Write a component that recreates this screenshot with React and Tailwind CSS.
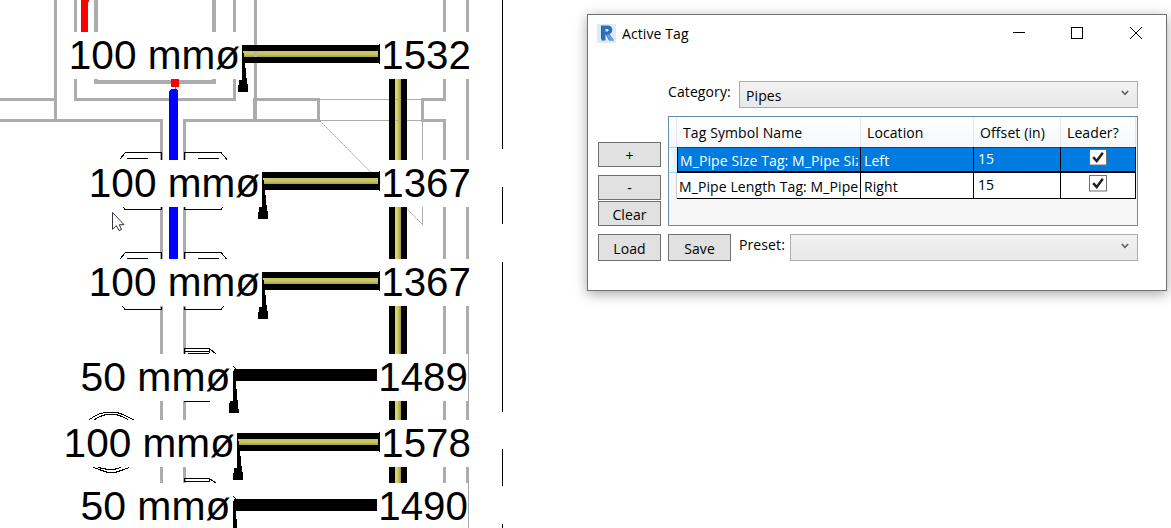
import React from "react";

const GRAY = "#acacac";

// l / r: tag texts with start x and drawn length; px, py: pipe origin; m: mask top; dx, dy: leader offset
const ROWS = [
  { l: "100 mmø", x: 68.8, w: 171.3, y: 69.3, r: "1532", rx: 381.3, px: 242, py: 45, wide: true, m: 32, dx: 0, dy: 0 },
  { l: "100 mmø", x: 88.8, w: 171.3, y: 197.3, r: "1367", rx: 381.3, px: 262, py: 172, wide: true, m: 160, dx: 20, dy: 127 },
  { l: "100 mmø", x: 88.8, w: 171.3, y: 296.3, r: "1367", rx: 381.3, px: 262, py: 272, wide: true, m: 259, dx: 20, dy: 227 },
  { l: "50 mmø", x: 80.5, w: 150, y: 391.3, r: "1489", rx: 378.3, px: 234, py: 369, wide: false, m: 354, dx: -9.5, dy: 321 },
  { l: "100 mmø", x: 63.6, w: 171.3, y: 457.3, r: "1578", rx: 381.3, px: 237, py: 433, wide: true, m: 420, dx: -5, dy: 388 },
  { l: "50 mmø", x: 80.5, w: 150, y: 520.3, r: "1490", rx: 378.3, px: 234, py: 499, wide: false, m: 483, dx: -9.5, dy: 451 },
];

const WALLS = [
  [54, 0, 3, 120], [74, 0, 3, 101], [94, 0, 4, 84], [212, 0, 4, 84], [233, 0, 3, 101],
  [254, 0, 3, 99], [253, 98, 4, 24], [0, 98, 55, 3], [74, 98, 162, 3], [95, 80, 121, 4],
  [0, 119, 163, 3], [183, 119, 137, 3], [254, 98, 65, 3], [317, 98, 3, 24], [421, 98, 3, 24],
  [421, 98, 25, 3], [421, 119, 25, 3], [443, 0, 3, 101], [443, 119, 3, 364], [466, 0, 3, 483],
  [160, 119, 3, 364], [183, 119, 3, 364], [320, 99, 101, 1], [320, 120, 101, 1], [422, 120, 1, 105],
];

function Basin({ dy }) {
  return (
    <g transform={`translate(0 ${dy})`} fill="none" stroke="#000">
      <path d="M119.5 159.5L125.5 152.5H161.5V160M127 158.5H148M184.5 160V152.5H221L227 159.5M198 158.5H219" />
      <path d="M122.5 206.5L125 209.5H161.5V207M184.5 207V209.5H221L223.5 206.5" />
    </g>
  );
}

function Drawing() {
  return (
    <svg className="h-[528px] w-[520px] shrink-0" viewBox="0 0 520 528">
      <defs>
        <linearGradient id="ph" x1="0" x2="0" y1="0" y2="1">
          <stop offset="0" stopColor="#c6c463" /><stop offset=".5" stopColor="#cbc963" /><stop offset="1" stopColor="#a3a04b" />
        </linearGradient>
        <linearGradient id="pv">
          <stop offset="0" stopColor="#d9d765" /><stop offset=".4" stopColor="#d5d367" /><stop offset="1" stopColor="#98954b" />
        </linearGradient>
      </defs>
      <g fill={GRAY} shapeRendering="crispEdges">
        {WALLS.map(([x, y, w, h], i) => <rect key={i} x={x} y={y} width={w} height={h} />)}
      </g>
      <path d="M320 121L422.5 224.5" stroke="#999" strokeWidth=".9" strokeDasharray="2 .6" />
      <g shapeRendering="crispEdges">
        <rect x="389" y="79" width="18" height="404" fill="#000" />
        <rect x="395" y="79" width="6" height="404" fill="url(#pv)" />
        <path d="M395 99.5H401M395 120.5H401" stroke="#b1af86" />
        <path d="M81 0H89V2H88V32H81Z" fill="#f00" />
        <path d="M175.5 86V90" stroke="#777" />
        <rect x="171" y="79" width="8" height="8" fill="#f00" />
        <path d="M169 259V91L171 89H176L178 91V259Z" fill="#00f" />
      </g>
      <g shapeRendering="crispEdges"><Basin dy={0} /><Basin dy={100} /></g>
      <g fill="none" stroke="#000" shapeRendering="crispEdges">
        <path d="M184.5 354V348.5H209.5V353M185 351.5H209M188 353.5H209M210 349L216 354M184 401.5H210" />
        <path d="M184.5 482V478.5H209.5V482M185 481.5H209M210 479L216 483" />
        <path d="M89.5 419.5L94 416.500L100 413.500L106 412.500H117L123 414.500L129 417.500L134 420" />
        <path d="M94.500 419.500L100 416.500L106 414.500H116L122 416.500L128 419.500" />
        <path d="M93.500 467.500L99 469.500L105 471.500L108 472.500H115L118 471.500L124 469.500L129 467.500" />
        <path d="M98 467.500L103 468.500L108 469.500H114L117 468.500L121 467.500" />
      </g>
      {ROWS.map((r, i) => (
        <g key={i} fill="#fff" shapeRendering="crispEdges">
          <rect x={r.x} y={r.m} width="171" height="47" />
          <rect x="381" y={r.m} width={r.wide ? 92 : 87} height="47" />
        </g>
      ))}
      <rect x="254" y="30" width="3" height="52" fill={GRAY} shapeRendering="crispEdges" />
      <rect x="468" y="483" width="1" height="45" fill={GRAY} shapeRendering="crispEdges" />
      {ROWS.map((r, i) => (
        <g key={i}>
          <g shapeRendering="crispEdges">
            {r.wide ? (
              <>
                <rect x={r.px} y={r.py} width={379 - r.px} height="18" fill="#000" />
                <rect x="379" y={r.py - 1} width="1" height="20" fill="#000" />
                <rect x={r.px} y={r.py + 6} width={378 - r.px} height="6" fill="url(#ph)" />
                <path d={`M${r.px + 1.5} ${r.py + 8}v8`} stroke="#000" />
              </>
            ) : (
              <>
                <rect x={r.px} y={r.py} width={377 - r.px} height="12" fill="#000" />
                <path d={`M${r.px - 1} ${r.py - 3}l3 3`} stroke="#000" />
              </>
            )}
            <path transform={`translate(${r.dx} ${r.dy})`} d="M242 50V56V80H239V82L238 88V92H248V88L247 79L246 78V68H245V60H244V56H243V50Z" />
          </g>
          <g fontFamily="Liberation Sans, Arial, sans-serif" fontSize="41.2" fill="#000">
            <text x={r.x} y={r.y} textLength={r.w} lengthAdjust="spacingAndGlyphs">{r.l}</text>
            <text x={r.rx} y={r.y} textLength="89.6" lengthAdjust="spacingAndGlyphs">{r.r}</text>
          </g>
        </g>
      ))}
      <path d="M254 54H257" stroke="#b8b8a0" strokeWidth="6" />
      <path d="M502.500 0V149M502.500 187V224M502.500 262V412M502.500 449V486M502.500 524V528" stroke="#000" shapeRendering="crispEdges" />
      <path d="M112.500 212.500V229.300L116.300 225.700L119 230.500L121.500 229.500L119.300 224.700H124Z" fill="#fff" stroke="#1c1c30" strokeWidth=".9" />
    </svg>
  );
}

function Button({ children, className }) {
  return <button className={`flex w-[63px] items-center justify-center border border-[#707070] bg-[#e1e1e1] ${className}`}>{children}</button>;
}

function Combo({ children, className }) {
  return (
    <div className={`flex h-[27px] items-center justify-between border border-[#acacac] bg-linear-to-b from-[#f2f2f2] to-[#e8e8e8] pr-2 pl-1.5 ${className}`}>
      <span className="pt-0.5">{children}</span>
      <svg className="mb-[3px] h-[6px] w-[8px]" viewBox="0 0 8 6"><path d="M.8 1L4 4.300L7.200 1" fill="none" stroke="#606060" strokeWidth="1.600" /></svg>
    </div>
  );
}

function Check() {
  return (
    <svg className="h-[17px] w-[18px]" viewBox="0 0 18 17">
      <rect x=".5" y=".5" width="17" height="15.500" fill="#fff" stroke="#707070" />
      <path d="M4.200 8.200L7.700 12L13.800 3.800" fill="none" stroke="#212121" strokeWidth="2.500" />
    </svg>
  );
}

const COLS = "grid grid-cols-[8px_184px_113px_87px_75px]";

function Row({ cells, selected }) {
  const cell = selected
    ? "border-r border-b-2 border-black bg-[#007bdf] text-white shadow-[inset_0_1px_0_#10497c]"
    : "border-r border-b border-black bg-white";
  return (
    <div className={`${COLS} h-[26px]`}>
      <div className={selected ? "border-y border-[#98d8f8] bg-linear-to-r from-white to-[#d8f0fc]" : "border-r border-[#d0d0d0] bg-[#f8f8f8]"} />
      <div className={`${cell} overflow-hidden pt-[4px] pr-0.5 pl-[2px] whitespace-nowrap ${selected ? "border-l" : ""}`}>
        <div className="overflow-hidden">{cells[0]}</div>
      </div>
      <div className={`${cell} pt-[4px] pl-[3px]`}>{cells[1]}</div>
      <div className={`${cell} pt-[2px] pl-1`}>{cells[2]}</div>
      <div className={`${cell} flex justify-center pt-[2px]`}><Check /></div>
    </div>
  );
}

function Dialog() {
  return (
    <section className="mt-[14px] ml-[67px] h-[277px] w-[580px] shrink-0 border border-[#707070] bg-white font-['Open_Sans','Noto_Sans',sans-serif] text-[14px] leading-[20px] tracking-[0.1px] text-black shadow-[0_3px_12px_rgba(0,0,0,0.35)]">
      <header className="flex h-[36px] items-center pl-[9px]">
        <svg className="h-[19px] w-[19px]" viewBox="0 0 19 19">
          <rect width="19" height="19" fill="#deebf7" />
          <path d="M4 1.500L7 3V16.500L4 14.500Z" fill="#164f91" />
          <path fillRule="evenodd" d="M4 1.500H11C16 1.500 17 8.500 12.500 10L17 16.500H12L9 11H8.500V16.500H4.500V3ZM8.500 5V7.500H10.500C12 7.500 12 5 10.500 5Z" fill="#2d6fb8" />
          <path d="M9.500 10.500H12.300L17 16.500H12.800Z" fill="#6ba2d6" />
        </svg>
        <h1 className="ml-[6px] flex-1 pt-px">Active Tag</h1>
        <svg className="mr-[23px] h-[14px] w-[131px]" viewBox="0 0 131 14" fill="none" stroke="#000" shapeRendering="crispEdges">
          <path d="M1 6.500H13M59.500 1.500H70.500V12.500H59.500Z" />
          <path d="M118 1L130 13M130 1L118 13" shapeRendering="auto" />
        </svg>
      </header>
      <div className="mt-[30px] ml-[80px] flex h-[27px]">
        <label className="w-[71px] pt-px">Category:</label>
        <Combo className="w-[399px]">Pipes</Combo>
      </div>
      <div className="mt-[8px] ml-[10px] flex h-[110px] gap-[7px]">
        <div className="flex flex-col pt-[26px]">
          <Button className="h-[25px] pt-[3px]">+</Button>
          <Button className="mt-[8px] h-[25px] pt-px">-</Button>
          <Button className="mt-px h-[25px] pt-[2px]">Clear</Button>
        </div>
        <div className="h-[110px] w-[470px] border border-[#688caf] bg-[#f6f6f6]">
          <div className={`${COLS} h-[30px] [&>div]:border-r [&>div]:border-[#e2e6ec] [&>div]:bg-linear-to-b [&>div]:from-white [&>div]:to-[#f5f7fa] [&>div]:pt-[6px] [&>div]:pl-[6px]`}>
            <div className="w-[8px]" />
            <div>Tag Symbol Name</div>
            <div>Location</div>
            <div>Offset (in)</div>
            <div>Leader?</div>
          </div>
          <Row selected cells={["M_Pipe Size Tag: M_Pipe Siz", "Left", "15"]} />
          <Row cells={["M_Pipe Length Tag: M_Pipe", "Right", "15"]} />
        </div>
      </div>
      <div className="mt-[8px] ml-[10px] flex h-[27px]">
        <Button className="pt-0.5">Load</Button>
        <Button className="ml-[7px] pt-0.5">Save</Button>
        <label className="ml-[8px] w-[51px] pt-px">Preset:</label>
        <Combo className="w-[348px]" />
      </div>
    </section>
  );
}

export default function App() {
  return (
    <main className="flex h-[528px] w-[1171px] overflow-hidden bg-white">
      <Drawing />
      <Dialog />
    </main>
  );
}
